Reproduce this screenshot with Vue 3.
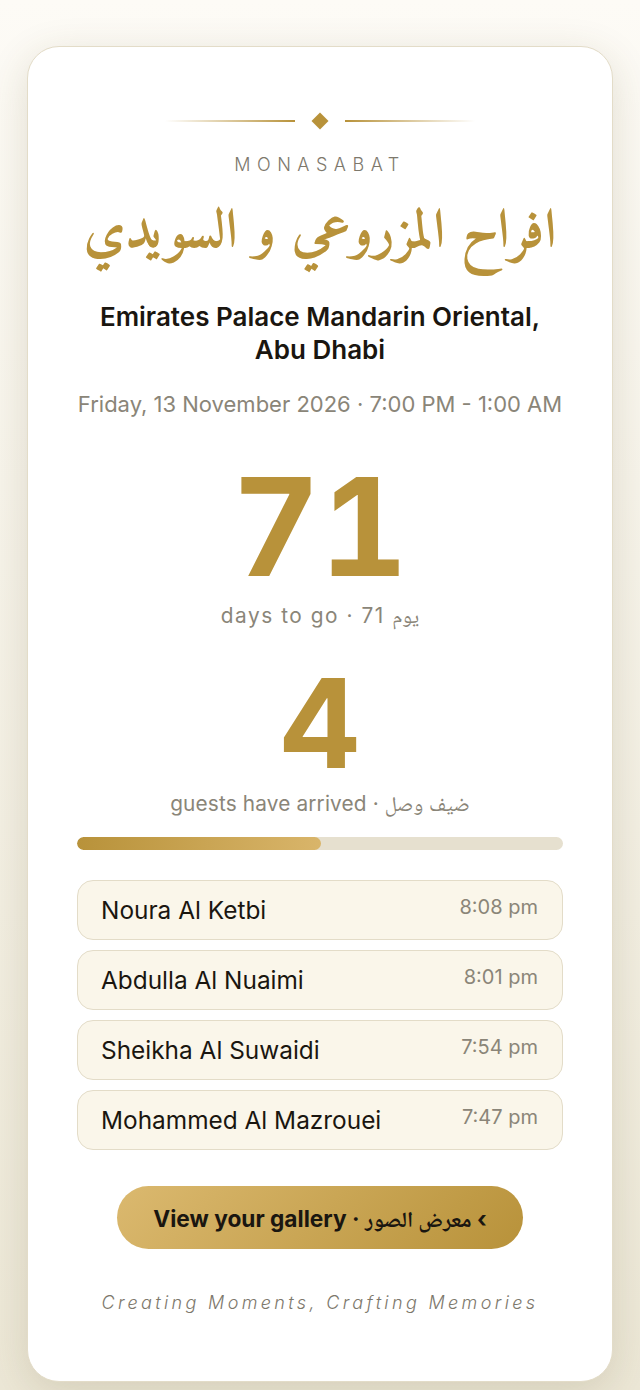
<template>
  <div class="page">
    <main class="card">
      <div class="ornament">
        <span class="line line-left"></span>
        <span class="diamond"></span>
        <span class="line line-right"></span>
      </div>
      <p class="brand">MONASABAT</p>
      <h1 class="title" dir="rtl">افراح المزروعي و السويدي</h1>
      <h2 class="venue">Emirates Palace Mandarin Oriental,<br>Abu Dhabi</h2>
      <p class="date">Friday, 13 November 2026 · 7:00 PM - 1:00 AM</p>

      <div class="count days">71</div>
      <p class="count-label days-label">days to go · 71 يوم</p>

      <div class="count guests">4</div>
      <p class="count-label guests-label">guests have arrived · ضيف وصل</p>

      <div class="bar"><div class="bar-fill" :style="{ width: progress + '%' }"></div></div>

      <ul class="guest-list">
        <li v-for="guest in guests" :key="guest.name" class="guest">
          <span class="guest-name">{{ guest.name }}</span>
          <span class="guest-time">{{ guest.time }}</span>
        </li>
      </ul>

      <a class="gallery-btn">View your gallery · <span class="btn-arabic">معرض الصور</span> ‹</a>
      <p class="tagline">Creating Moments, Crafting Memories</p>
    </main>
  </div>
</template>

<script setup>
const progress = 50.3

const guests = [
  { name: 'Noura Al Ketbi', time: '8:08 pm' },
  { name: 'Abdulla Al Nuaimi', time: '8:01 pm' },
  { name: 'Sheikha Al Suwaidi', time: '7:54 pm' },
  { name: 'Mohammed Al Mazrouei', time: '7:47 pm' }
]
</script>

<style>
html,
body {
  margin: 0;
  padding: 0;
}
</style>

<style scoped>
.page {
  box-sizing: border-box;
  height: 1390px;
  overflow: hidden;
  padding: 46px 27px 0;
  background: linear-gradient(180deg, #fdfbf6 0%, #ece7d6 100%);
  font-family: Inter, "Noto Naskh Arabic", sans-serif;
}

.card {
  box-sizing: border-box;
  height: 1336px;
  padding: 65px 49px 0;
  background: #fff;
  border: 1px solid #e3dcc8;
  border-radius: 32px;
  box-shadow: 0 10px 40px rgba(90, 75, 30, 0.16);
  text-align: center;
}

.ornament {
  display: flex;
  align-items: center;
  justify-content: center;
  gap: 19px;
  height: 18px;
}

.line {
  width: 130px;
  height: 2px;
}

.line-left {
  background: linear-gradient(90deg, transparent, #b8923a);
}

.line-right {
  background: linear-gradient(90deg, #b8923a, transparent);
}

.diamond {
  width: 12px;
  height: 12px;
  background: #b8923a;
  transform: rotate(45deg);
}

.brand {
  margin: 23px 0 0;
  font-size: 18px;
  font-weight: 300;
  line-height: 24px;
  letter-spacing: 6.5px;
  color: #7d786c;
}

.title {
  margin: 0 0 10px;
  font-family: Amiri, "Noto Naskh Arabic", serif;
  font-size: 55px;
  line-height: 113px;
  font-weight: 700;
  color: #b8923a;
  white-space: nowrap;
}

.venue {
  margin: 0;
  font-size: 26px;
  line-height: 33px;
  font-weight: 600;
  color: #1a1610;
}

.date {
  margin: 22px 0 0;
  font-size: 22px;
  line-height: 32px;
  color: #8a8578;
  white-space: nowrap;
}

.count {
  font-weight: 700;
  font-variant-numeric: tabular-nums;
  color: #b8923a;
}

.days {
  margin-top: 39px;
  font-size: 136px;
  line-height: 136px;
}

.guests {
  margin-top: 30px;
  font-size: 124px;
  line-height: 124px;
}

.count-label {
  font-size: 20.8px;
  line-height: 30px;
  color: #8a8578;
}

.days-label {
  margin: 6px 0 0;
  letter-spacing: 1.55px;
}

.guests-label {
  margin: 4px 0 0;
  letter-spacing: 0.15px;
}

.bar {
  margin-top: 18px;
  height: 13px;
  border-radius: 7px;
  background: #e6e0cf;
  overflow: hidden;
}

.bar-fill {
  height: 100%;
  border-radius: 7px;
  background: linear-gradient(90deg, #b8923a, #d9b56a);
}

.guest-list {
  list-style: none;
  margin: 30px 0 0;
  padding: 0;
  display: flex;
  flex-direction: column;
  gap: 10px;
}

.guest {
  box-sizing: border-box;
  height: 60px;
  display: flex;
  justify-content: space-between;
  padding: 0 24px 0 23px;
  background: #faf6ea;
  border: 1px solid #e3dcc8;
  border-radius: 16px;
}

.guest-name {
  font-size: 24.4px;
  line-height: 58px;
  color: #1a1610;
}

.guest-time {
  font-size: 20px;
  line-height: 52px;
  color: #8a8578;
}

.gallery-btn {
  display: block;
  width: 406px;
  height: 63px;
  margin: 36px auto 0;
  border-radius: 32px;
  background: linear-gradient(135deg, #dbb96f, #b8923a);
  font-size: 22.7px;
  font-weight: 700;
  line-height: 65px;
  color: #1a1610;
}

.btn-arabic {
  font-size: 21.8px;
}

.tagline {
  margin: 42px 0 0;
  font-size: 18px;
  font-weight: 300;
  line-height: 24px;
  font-style: italic;
  letter-spacing: 3.35px;
  color: #7d786c;
  white-space: nowrap;
}
</style>
